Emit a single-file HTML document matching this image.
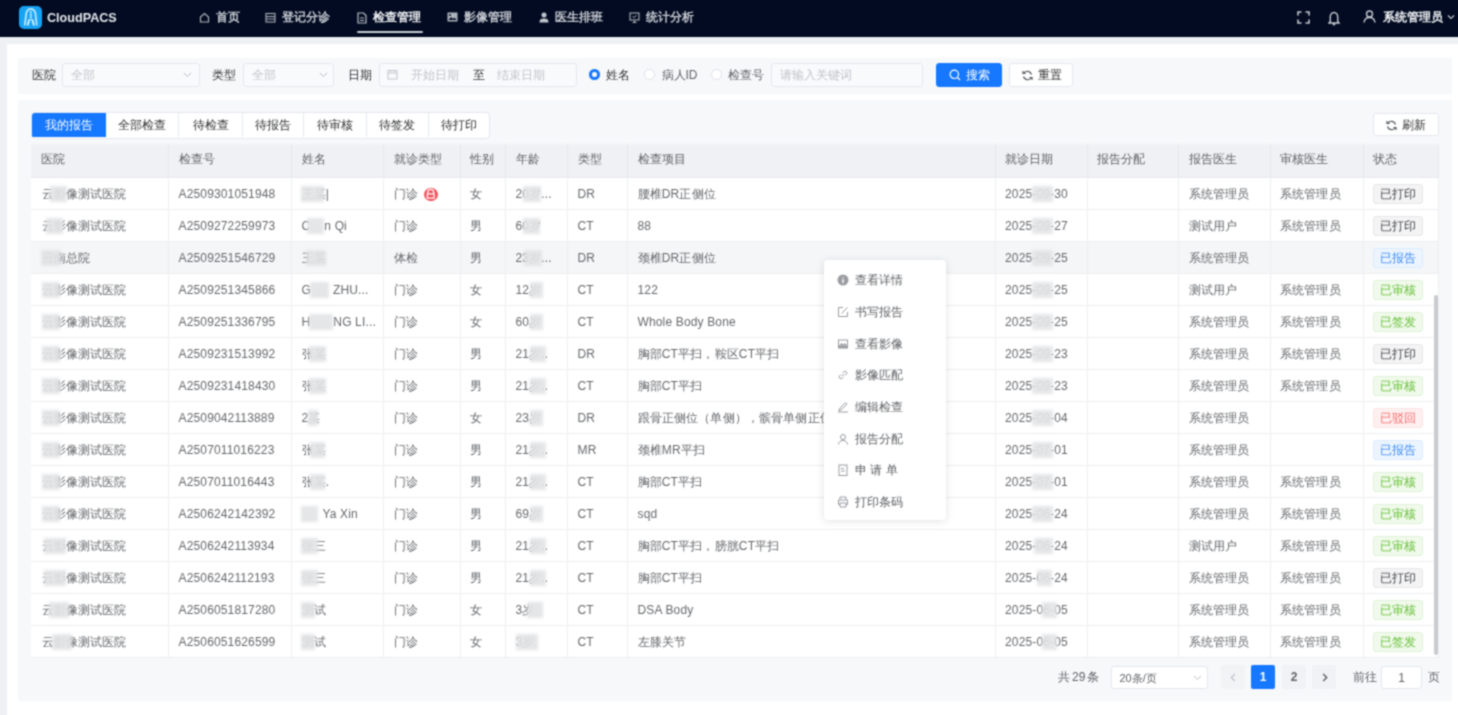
<!DOCTYPE html><html><head><meta charset="utf-8"><style>
*{box-sizing:border-box;margin:0;padding:0}
body{width:1458px;height:715px;overflow:hidden;background:#fff;font-family:"Liberation Sans",sans-serif;position:relative;color:#606266}
.abs{position:absolute}
svg{display:block}
#hdr{left:0;top:0;width:1458px;height:37px;background:#020b21}
#band{left:0;top:37px;width:1458px;height:7px;background:#eef0f4}
#lband{left:0;top:37px;width:7px;height:678px;background:#eef0f4}
.logo{left:18.5px;top:6px;width:23.5px;height:23px;border-radius:5px;background:#17a3f4;overflow:hidden}
.brand{left:47px;top:11px;font-size:12.6px;font-weight:bold;color:#e4e7ec;line-height:14px}
.nav{top:9px;font-size:12.3px;color:#c5c9d0;white-space:nowrap;line-height:16px;font-weight:bold}
.nav.act{color:#eef0f3}
.nico{top:12px}
.ul{left:357px;top:30.5px;width:66px;height:2.5px;background:#c8ccd4;border-radius:1px}
#filt{left:18px;top:57.5px;width:1434px;height:36px;background:#f7f8fa}
#tblp{left:18px;top:100px;width:1434px;height:601px;background:#f7f8fa}
.lbl{font-size:12px;color:#303133;top:67px;line-height:16px}
.inp{height:24px;top:63px;border:1px solid #e4e7ed;border-radius:3px;background:#f9fafb;font-size:12px;color:#c0c4cc;line-height:22px;white-space:nowrap}
.ph{position:absolute;top:0;color:#c0c4cc}
.chev{position:absolute;top:8px}
.btn{top:63px;height:24px;border-radius:3px;font-size:12px;line-height:22px;white-space:nowrap}
.radio{top:69px;width:10.5px;height:10.5px;border-radius:50%;border:1px solid #dcdfe6;background:#fff}
.radio.on{border:3px solid #1677ff}
.tabs{left:31px;top:112px;height:26.5px;border:1px solid #e4e7ed;border-radius:4px;background:#fff;display:flex;overflow:hidden}
.tab{height:24px;line-height:24px;font-size:12px;color:#303133;text-align:center;border-right:1px solid #e4e7ed;flex:none}
.tab:last-child{border-right:none}
.tab.on{background:#1677ff;color:#fff;border-right:none}
.th{top:144px;height:34px;background:#eff1f4;border-bottom:1px solid #e8eaef}
.cellh{position:absolute;font-size:12px;color:#606266;line-height:30px;padding-left:9.5px;border-right:1px solid #e6e8ee;height:33px}
.row{position:absolute;left:31px;width:1408px;height:32px;background:#fff;border-bottom:1px solid #eceef1}
.row.hov{background:#f5f6f7}
.c{position:absolute;top:0;height:31px;line-height:33px;font-size:12px;letter-spacing:0.15px;color:#66686c;padding-left:9.5px;white-space:nowrap;overflow:hidden;border-right:1px solid #eceef1}
.blob{position:absolute;top:8px;height:16px;background:#e3e4e6;filter:blur(1.6px);opacity:.92}
.m::after{content:"";position:absolute;left:-1px;right:-1px;top:-4px;bottom:-4px;background:#dadbde;filter:blur(2px)}
.tag{display:inline-block;height:20px;line-height:18px;padding:0 6px;font-size:12px;border:1px solid;border-radius:3px;vertical-align:middle;position:relative;top:-1px}
.tp{background:#f4f4f5;border-color:#e6e7e9;color:#45474b}
.tr{background:#ecf5ff;border-color:#d9ecff;color:#3d8bf5}
.ta{background:#f0f9eb;border-color:#e1f3d8;color:#67c23a}
.tx{background:#fef0f0;border-color:#fde2e2;color:#f56c6c}
#menu{left:824px;top:260px;width:122px;height:260px;background:#fff;border-radius:4px;box-shadow:0 1px 8px rgba(0,0,0,.12)}
.mi{position:absolute;left:31px;font-size:12px;color:#606266;white-space:nowrap;line-height:16px}
.mic{position:absolute;left:13px}
.pg{top:665px;height:24px;width:24px;border-radius:2px;background:#f0f2f5;font-size:12px;line-height:24px;text-align:center;color:#606266;font-weight:bold}
#sb{left:1433.5px;top:295px;width:4px;height:360px;background:#c9cbcf;border-radius:2px}
#root{position:absolute;left:0;top:0;width:1458px;height:715px;overflow:hidden;filter:url(#soft)}
</style></head><body><svg width="0" height="0" style="position:absolute"><filter id="soft" x="0" y="0" width="100%" height="100%" color-interpolation-filters="sRGB"><feConvolveMatrix order="3" kernelMatrix="1 2 1 2 6 2 1 2 1" divisor="18" edgeMode="duplicate"/></filter></svg><div id="root">

<div id="hdr" class="abs"></div><div id="band" class="abs"></div><div id="lband" class="abs"></div>
<div class="abs logo"><svg width="24" height="23" viewBox="0 0 24 23"><path d="M5.8 19.5L7.3 7Q8.3 3 11.8 3Q15.3 3 16.3 7L17.8 19.5" fill="none" stroke="#c8ecfd" stroke-width="1.9" opacity=".9"/><path d="M8.6 19.5L10.3 13.5M15 19.5L13.3 13.5" fill="none" stroke="#d6f2fe" stroke-width="1.9"/><path d="M11.8 5.5V14" stroke="#e0f5fe" stroke-width="2.2" stroke-dasharray="1.6 0.9"/></svg></div>
<div class="abs brand">CloudPACS</div>
<div class="abs nico" style="left:198.5px"><svg width="11" height="11" viewBox="0 0 11 11"><path d="M1.5 5 L5.5 1.5 L9.5 5 V10 H1.5 Z" fill="none" stroke="#aeb3bb" stroke-width="1.2"/></svg></div>
<div class="abs nav" style="left:215.5px">首页</div>
<div class="abs nico" style="left:264.5px"><svg width="11" height="11" viewBox="0 0 11 11"><rect x="1" y="1.5" width="9" height="8.5" fill="none" stroke="#aeb3bb" stroke-width="1.1"/><path d="M1 4.5H10M1 7H10" stroke="#aeb3bb" stroke-width="1"/></svg></div>
<div class="abs nav" style="left:282px">登记分诊</div>
<div class="abs nico" style="left:356.5px"><svg width="10" height="12" viewBox="0 0 10 12"><path d="M1 1H6.5L9 3.5V11H1Z" fill="none" stroke="#bcc0c7" stroke-width="1.2"/><path d="M3 6H7M3 8.5H7" stroke="#bcc0c7" stroke-width="1"/></svg></div>
<div class="abs nav act" style="left:373px">检查管理</div>
<div class="abs nico" style="left:447px"><svg width="11" height="10" viewBox="0 0 11 10"><rect x="0.5" y="0.5" width="10" height="9" fill="#aeb3bb"/><path d="M1.5 8L4 5L6 7L7.5 5.5L9.5 8Z" fill="#020b21"/><circle cx="3" cy="3" r="1" fill="#020b21"/></svg></div>
<div class="abs nav" style="left:464px">影像管理</div>
<div class="abs nico" style="left:538.5px"><svg width="10" height="11" viewBox="0 0 10 11"><circle cx="5" cy="3" r="2.5" fill="#c2c6cd"/><path d="M0.5 10.5C0.5 7 2.5 6.5 5 6.5S9.5 7 9.5 10.5Z" fill="#c2c6cd"/></svg></div>
<div class="abs nav" style="left:555px">医生排班</div>
<div class="abs nico" style="left:629px"><svg width="11" height="11" viewBox="0 0 11 11"><rect x="1" y="1" width="9" height="7" fill="none" stroke="#aeb3bb" stroke-width="1.1"/><path d="M3.5 10.5H7.5M5.5 8V10.5M3.5 4.5L5 5.5L7.5 3.5" stroke="#aeb3bb" stroke-width="1" fill="none"/></svg></div>
<div class="abs nav" style="left:646px">统计分析</div>
<div class="abs ul"></div>
<div class="abs" style="left:1296.5px;top:10.5px"><svg width="13" height="13" viewBox="0 0 13 13"><path d="M1 4.5V1H4.5M8.5 1H12V4.5M12 8.5V12H8.5M4.5 12H1V8.5" fill="none" stroke="#c4c8cf" stroke-width="1.6"/></svg></div>
<div class="abs" style="left:1328px;top:10.5px"><svg width="12" height="15" viewBox="0 0 12 15"><path d="M6 1.5C3.5 1.5 2.3 3.5 2.3 6V10.5L1 12H11L9.7 10.5V6C9.7 3.5 8.5 1.5 6 1.5Z" fill="none" stroke="#c4c8cf" stroke-width="1.4"/><circle cx="6" cy="13.3" r="1.2" fill="#c4c8cf"/></svg></div>
<div class="abs" style="left:1362.5px;top:10px"><svg width="13" height="13" viewBox="0 0 13 13"><circle cx="6.5" cy="4" r="3" fill="none" stroke="#c4c8cf" stroke-width="1.4"/><path d="M1 12.5C1.5 9 3.5 7.5 6.5 7.5S11.5 9 12 12.5" fill="none" stroke="#c4c8cf" stroke-width="1.4"/></svg></div>
<div class="abs nav act" style="left:1383px;top:9px;font-weight:bold">系统管理员</div>
<div class="abs" style="left:1447px;top:14px"><svg width="8" height="6" viewBox="0 0 8 6"><path d="M1 1.5L4 4.5L7 1.5" fill="none" stroke="#c4c8cf" stroke-width="1.2"/></svg></div>
<div id="filt" class="abs"></div><div id="tblp" class="abs"></div>
<div class="abs lbl" style="left:32px">医院</div>
<div class="abs inp" style="left:62px;width:138px"><span class="ph" style="left:8px">全部</span><span class="chev" style="left:120px"><svg width="9" height="6" viewBox="0 0 9 6"><path d="M1 1L4.5 4.5L8 1" fill="none" stroke="#b8bcc4" stroke-width="1"/></svg></span></div>
<div class="abs lbl" style="left:212px">类型</div>
<div class="abs inp" style="left:243px;width:91px"><span class="ph" style="left:8px">全部</span><span class="chev" style="left:75px"><svg width="9" height="6" viewBox="0 0 9 6"><path d="M1 1L4.5 4.5L8 1" fill="none" stroke="#b8bcc4" stroke-width="1"/></svg></span></div>
<div class="abs lbl" style="left:348px">日期</div>
<div class="abs inp" style="left:378.5px;width:198px"><span class="ph" style="left:7px;top:5px"><svg width="11" height="11" viewBox="0 0 11 11"><rect x="1" y="1.5" width="9" height="8.5" fill="none" stroke="#c0c4cc" stroke-width="1"/><path d="M1 4H10M3.5 1V3M7.5 1V3" stroke="#c0c4cc" stroke-width="1"/></svg></span><span class="ph" style="left:31px">开始日期</span><span class="ph" style="left:93px;color:#303133">至</span><span class="ph" style="left:117px">结束日期</span></div>
<div class="abs radio on" style="left:589px"></div><div class="abs lbl" style="left:606px">姓名</div>
<div class="abs radio" style="left:644px"></div><div class="abs lbl" style="left:661.5px;color:#606266">病人ID</div>
<div class="abs radio" style="left:711px"></div><div class="abs lbl" style="left:728px;color:#606266">检查号</div>
<div class="abs inp" style="left:771px;width:152px"><span class="ph" style="left:8px">请输入关键词</span></div>
<div class="abs btn" style="left:936px;width:66px;background:#1677ff;color:#fff;border:1px solid #1677ff"><span class="abs" style="left:12px;top:5px"><svg width="12" height="12" viewBox="0 0 12 12"><circle cx="5.3" cy="5.3" r="4.2" fill="none" stroke="#fff" stroke-width="1.2"/><path d="M8.5 8.5L11 11" stroke="#fff" stroke-width="1.2"/></svg></span><span class="abs" style="left:29px;top:0">搜索</span></div>
<div class="abs btn" style="left:1009px;width:64px;background:#fff;color:#303133;border:1px solid #e4e7ed"><span class="abs" style="left:12px;top:6px"><svg width="11" height="11" viewBox="0 0 11 11"><path d="M9.5 4.5A4.2 4.2 0 0 0 2 3M1.5 6.5A4.2 4.2 0 0 0 9 8" fill="none" stroke="#505358" stroke-width="1.2"/><path d="M1 1V3.5H3.5M10 10V7.5H7.5" fill="none" stroke="#505358" stroke-width="1.2"/></svg></span><span class="abs" style="left:28px;top:0;font-weight:500">重置</span></div>
<div class="abs tabs">
<div class="tab on" style="width:74.4px">我的报告</div>
<div class="tab" style="width:73.1px">全部检查</div>
<div class="tab" style="width:63.2px">待检查</div>
<div class="tab" style="width:61.8px">待报告</div>
<div class="tab" style="width:62.1px">待审核</div>
<div class="tab" style="width:62px">待签发</div>
<div class="tab" style="width:60px">待打印</div>
</div>
<div class="abs btn" style="left:1373px;top:113px;width:65.5px;height:23px;background:#fff;color:#303133;border:1px solid #e4e7ed"><span class="abs" style="left:12px;top:5.5px"><svg width="11" height="11" viewBox="0 0 11 11"><path d="M9.5 4.5A4.2 4.2 0 0 0 2 3M1.5 6.5A4.2 4.2 0 0 0 9 8" fill="none" stroke="#505358" stroke-width="1.2"/><path d="M1 1V3.5H3.5M10 10V7.5H7.5" fill="none" stroke="#505358" stroke-width="1.2"/></svg></span><span class="abs" style="left:28px;top:0">刷新</span></div>
<div class="abs th" style="left:31px;width:1408px"></div>
<div class="cellh" style="left:31px;top:144px;width:138.0px">医院</div>
<div class="cellh" style="left:169.0px;top:144px;width:123.0px">检查号</div>
<div class="cellh" style="left:292.0px;top:144px;width:92.0px">姓名</div>
<div class="cellh" style="left:384.0px;top:144px;width:76.5px">就诊类型</div>
<div class="cellh" style="left:460.5px;top:144px;width:45.5px">性别</div>
<div class="cellh" style="left:506.0px;top:144px;width:62.0px">年龄</div>
<div class="cellh" style="left:568.0px;top:144px;width:60.0px">类型</div>
<div class="cellh" style="left:628.0px;top:144px;width:367.5px">检查项目</div>
<div class="cellh" style="left:995.5px;top:144px;width:92.0px">就诊日期</div>
<div class="cellh" style="left:1087.5px;top:144px;width:91.5px">报告分配</div>
<div class="cellh" style="left:1179.0px;top:144px;width:91.5px">报告医生</div>
<div class="cellh" style="left:1270.5px;top:144px;width:93.0px">审核医生</div>
<div class="cellh" style="left:1363.5px;top:144px;width:75.5px">状态</div>
<div class="row" style="top:178px">
<div class="c" style="padding-left:10.5px;left:0px;width:138.0px">云影像测试医院</div>
<div class="c" style="left:138.0px;width:123.0px">A2509301051948</div>
<div class="c" style="left:261.0px;width:92.0px">王某|</div>
<div class="c" style="left:353.0px;width:76.5px">门诊 <span style="display:inline-block;width:13.5px;height:13.5px;border-radius:50%;background:#f5505a;vertical-align:middle;position:relative;top:-0.5px;margin-left:3px"><svg width="13.5" height="13.5" viewBox="0 0 14 14"><path d="M4 6V4.5A3 3 0 0 1 10 4.5V6M3.5 6H10.5V10.5H3.5Z" fill="none" stroke="#fff" stroke-width="1.3"/></svg></span></div>
<div class="c" style="left:429.5px;width:45.5px">女</div>
<div class="c" style="left:475.0px;width:62.0px">20岁...</div>
<div class="c" style="left:537.0px;width:60.0px">DR</div>
<div class="c" style="left:597.0px;width:367.5px">腰椎DR正侧位</div>
<div class="c" style="left:964.5px;width:92.0px">2025-09-30</div>
<div class="c" style="left:1056.5px;width:91.5px"></div>
<div class="c" style="left:1148.0px;width:91.5px">系统管理员</div>
<div class="c" style="left:1239.5px;width:93.0px">系统管理员</div>
<div class="c" style="left:1332.5px;width:75.5px"><span class="tag tp">已打印</span></div>
<i class="blob" style="left:19px;width:17px"></i>
<i class="blob" style="left:270px;width:23px"></i>
<i class="blob" style="left:492px;width:18px"></i>
<i class="blob" style="left:1001px;width:21px"></i>
</div>
<div class="row" style="top:210px">
<div class="c" style="padding-left:10.5px;left:0px;width:138.0px">云影像测试医院</div>
<div class="c" style="left:138.0px;width:123.0px">A2509272259973</div>
<div class="c" style="left:261.0px;width:92.0px">C<span style="display:inline-block;width:14px"></span>n Qi</div>
<div class="c" style="left:353.0px;width:76.5px">门诊</div>
<div class="c" style="left:429.5px;width:45.5px">男</div>
<div class="c" style="left:475.0px;width:62.0px">60岁</div>
<div class="c" style="left:537.0px;width:60.0px">CT</div>
<div class="c" style="left:597.0px;width:367.5px">88</div>
<div class="c" style="left:964.5px;width:92.0px">2025-09-27</div>
<div class="c" style="left:1056.5px;width:91.5px"></div>
<div class="c" style="left:1148.0px;width:91.5px">测试用户</div>
<div class="c" style="left:1239.5px;width:93.0px">系统管理员</div>
<div class="c" style="left:1332.5px;width:75.5px"><span class="tag tp">已打印</span></div>
<i class="blob" style="left:15px;width:17px"></i>
<i class="blob" style="left:276px;width:17px"></i>
<i class="blob" style="left:492px;width:17px"></i>
<i class="blob" style="left:1001px;width:21px"></i>
</div>
<div class="row hov" style="top:242px">
<div class="c" style="padding-left:10.5px;left:0px;width:138.0px">云南总院</div>
<div class="c" style="left:138.0px;width:123.0px">A2509251546729</div>
<div class="c" style="left:261.0px;width:92.0px">王某</div>
<div class="c" style="left:353.0px;width:76.5px">体检</div>
<div class="c" style="left:429.5px;width:45.5px">男</div>
<div class="c" style="left:475.0px;width:62.0px">23岁...</div>
<div class="c" style="left:537.0px;width:60.0px">DR</div>
<div class="c" style="left:597.0px;width:367.5px">颈椎DR正侧位</div>
<div class="c" style="left:964.5px;width:92.0px">2025-09-25</div>
<div class="c" style="left:1056.5px;width:91.5px"></div>
<div class="c" style="left:1148.0px;width:91.5px">系统管理员</div>
<div class="c" style="left:1239.5px;width:93.0px"></div>
<div class="c" style="left:1332.5px;width:75.5px"><span class="tag tr">已报告</span></div>
<i class="blob" style="left:10px;width:20px"></i>
<i class="blob" style="left:275px;width:20px"></i>
<i class="blob" style="left:493px;width:18px"></i>
<i class="blob" style="left:1001px;width:21px"></i>
</div>
<div class="row" style="top:274px">
<div class="c" style="padding-left:10.5px;left:0px;width:138.0px">云影像测试医院</div>
<div class="c" style="left:138.0px;width:123.0px">A2509251345866</div>
<div class="c" style="left:261.0px;width:92.0px">G<span style="display:inline-block;width:22px"></span>ZHU...</div>
<div class="c" style="left:353.0px;width:76.5px">门诊</div>
<div class="c" style="left:429.5px;width:45.5px">女</div>
<div class="c" style="left:475.0px;width:62.0px">12岁</div>
<div class="c" style="left:537.0px;width:60.0px">CT</div>
<div class="c" style="left:597.0px;width:367.5px">122</div>
<div class="c" style="left:964.5px;width:92.0px">2025-09-25</div>
<div class="c" style="left:1056.5px;width:91.5px"></div>
<div class="c" style="left:1148.0px;width:91.5px">测试用户</div>
<div class="c" style="left:1239.5px;width:93.0px">系统管理员</div>
<div class="c" style="left:1332.5px;width:75.5px"><span class="tag ta">已审核</span></div>
<i class="blob" style="left:11px;width:18px"></i>
<i class="blob" style="left:279px;width:19px"></i>
<i class="blob" style="left:499px;width:13px"></i>
<i class="blob" style="left:1001px;width:21px"></i>
</div>
<div class="row" style="top:306px">
<div class="c" style="padding-left:10.5px;left:0px;width:138.0px">云影像测试医院</div>
<div class="c" style="left:138.0px;width:123.0px">A2509251336795</div>
<div class="c" style="left:261.0px;width:92.0px">H<span style="display:inline-block;width:23px"></span>NG LI...</div>
<div class="c" style="left:353.0px;width:76.5px">门诊</div>
<div class="c" style="left:429.5px;width:45.5px">女</div>
<div class="c" style="left:475.0px;width:62.0px">60岁</div>
<div class="c" style="left:537.0px;width:60.0px">CT</div>
<div class="c" style="left:597.0px;width:367.5px">Whole Body Bone</div>
<div class="c" style="left:964.5px;width:92.0px">2025-09-25</div>
<div class="c" style="left:1056.5px;width:91.5px"></div>
<div class="c" style="left:1148.0px;width:91.5px">系统管理员</div>
<div class="c" style="left:1239.5px;width:93.0px">系统管理员</div>
<div class="c" style="left:1332.5px;width:75.5px"><span class="tag ta">已签发</span></div>
<i class="blob" style="left:11px;width:18px"></i>
<i class="blob" style="left:278px;width:24px"></i>
<i class="blob" style="left:499px;width:13px"></i>
<i class="blob" style="left:1001px;width:21px"></i>
</div>
<div class="row" style="top:338px">
<div class="c" style="padding-left:10.5px;left:0px;width:138.0px">云影像测试医院</div>
<div class="c" style="left:138.0px;width:123.0px">A2509231513992</div>
<div class="c" style="left:261.0px;width:92.0px">张某</div>
<div class="c" style="left:353.0px;width:76.5px">门诊</div>
<div class="c" style="left:429.5px;width:45.5px">男</div>
<div class="c" style="left:475.0px;width:62.0px">21岁..</div>
<div class="c" style="left:537.0px;width:60.0px">DR</div>
<div class="c" style="left:597.0px;width:367.5px">胸部CT平扫，鞍区CT平扫</div>
<div class="c" style="left:964.5px;width:92.0px">2025-09-23</div>
<div class="c" style="left:1056.5px;width:91.5px"></div>
<div class="c" style="left:1148.0px;width:91.5px">系统管理员</div>
<div class="c" style="left:1239.5px;width:93.0px">系统管理员</div>
<div class="c" style="left:1332.5px;width:75.5px"><span class="tag tp">已打印</span></div>
<i class="blob" style="left:11px;width:18px"></i>
<i class="blob" style="left:278px;width:17px"></i>
<i class="blob" style="left:499px;width:16px"></i>
<i class="blob" style="left:1001px;width:21px"></i>
</div>
<div class="row" style="top:370px">
<div class="c" style="padding-left:10.5px;left:0px;width:138.0px">云影像测试医院</div>
<div class="c" style="left:138.0px;width:123.0px">A2509231418430</div>
<div class="c" style="left:261.0px;width:92.0px">张某</div>
<div class="c" style="left:353.0px;width:76.5px">门诊</div>
<div class="c" style="left:429.5px;width:45.5px">男</div>
<div class="c" style="left:475.0px;width:62.0px">21岁..</div>
<div class="c" style="left:537.0px;width:60.0px">CT</div>
<div class="c" style="left:597.0px;width:367.5px">胸部CT平扫</div>
<div class="c" style="left:964.5px;width:92.0px">2025-09-23</div>
<div class="c" style="left:1056.5px;width:91.5px"></div>
<div class="c" style="left:1148.0px;width:91.5px">系统管理员</div>
<div class="c" style="left:1239.5px;width:93.0px">系统管理员</div>
<div class="c" style="left:1332.5px;width:75.5px"><span class="tag ta">已审核</span></div>
<i class="blob" style="left:11px;width:18px"></i>
<i class="blob" style="left:278px;width:17px"></i>
<i class="blob" style="left:499px;width:16px"></i>
<i class="blob" style="left:1001px;width:21px"></i>
</div>
<div class="row" style="top:402px">
<div class="c" style="padding-left:10.5px;left:0px;width:138.0px">云影像测试医院</div>
<div class="c" style="left:138.0px;width:123.0px">A2509042113889</div>
<div class="c" style="left:261.0px;width:92.0px">2某</div>
<div class="c" style="left:353.0px;width:76.5px">门诊</div>
<div class="c" style="left:429.5px;width:45.5px">女</div>
<div class="c" style="left:475.0px;width:62.0px">23岁</div>
<div class="c" style="left:537.0px;width:60.0px">DR</div>
<div class="c" style="left:597.0px;width:367.5px">跟骨正侧位（单侧），髌骨单侧正位</div>
<div class="c" style="left:964.5px;width:92.0px">2025-09-04</div>
<div class="c" style="left:1056.5px;width:91.5px"></div>
<div class="c" style="left:1148.0px;width:91.5px">系统管理员</div>
<div class="c" style="left:1239.5px;width:93.0px"></div>
<div class="c" style="left:1332.5px;width:75.5px"><span class="tag tx">已驳回</span></div>
<i class="blob" style="left:11px;width:18px"></i>
<i class="blob" style="left:277px;width:10px"></i>
<i class="blob" style="left:499px;width:13px"></i>
<i class="blob" style="left:1001px;width:21px"></i>
</div>
<div class="row" style="top:434px">
<div class="c" style="padding-left:10.5px;left:0px;width:138.0px">云影像测试医院</div>
<div class="c" style="left:138.0px;width:123.0px">A2507011016223</div>
<div class="c" style="left:261.0px;width:92.0px">张某</div>
<div class="c" style="left:353.0px;width:76.5px">门诊</div>
<div class="c" style="left:429.5px;width:45.5px">男</div>
<div class="c" style="left:475.0px;width:62.0px">21岁..</div>
<div class="c" style="left:537.0px;width:60.0px">MR</div>
<div class="c" style="left:597.0px;width:367.5px">颈椎MR平扫</div>
<div class="c" style="left:964.5px;width:92.0px">2025-07-01</div>
<div class="c" style="left:1056.5px;width:91.5px"></div>
<div class="c" style="left:1148.0px;width:91.5px">系统管理员</div>
<div class="c" style="left:1239.5px;width:93.0px"></div>
<div class="c" style="left:1332.5px;width:75.5px"><span class="tag tr">已报告</span></div>
<i class="blob" style="left:11px;width:18px"></i>
<i class="blob" style="left:279px;width:15px"></i>
<i class="blob" style="left:499px;width:16px"></i>
<i class="blob" style="left:1001px;width:21px"></i>
</div>
<div class="row" style="top:466px">
<div class="c" style="padding-left:10.5px;left:0px;width:138.0px">云影像测试医院</div>
<div class="c" style="left:138.0px;width:123.0px">A2507011016443</div>
<div class="c" style="left:261.0px;width:92.0px">张某.</div>
<div class="c" style="left:353.0px;width:76.5px">门诊</div>
<div class="c" style="left:429.5px;width:45.5px">男</div>
<div class="c" style="left:475.0px;width:62.0px">21岁..</div>
<div class="c" style="left:537.0px;width:60.0px">CT</div>
<div class="c" style="left:597.0px;width:367.5px">胸部CT平扫</div>
<div class="c" style="left:964.5px;width:92.0px">2025-07-01</div>
<div class="c" style="left:1056.5px;width:91.5px"></div>
<div class="c" style="left:1148.0px;width:91.5px">系统管理员</div>
<div class="c" style="left:1239.5px;width:93.0px">系统管理员</div>
<div class="c" style="left:1332.5px;width:75.5px"><span class="tag ta">已审核</span></div>
<i class="blob" style="left:11px;width:18px"></i>
<i class="blob" style="left:279px;width:15px"></i>
<i class="blob" style="left:499px;width:16px"></i>
<i class="blob" style="left:1001px;width:21px"></i>
</div>
<div class="row" style="top:498px">
<div class="c" style="padding-left:10.5px;left:0px;width:138.0px">云影像测试医院</div>
<div class="c" style="left:138.0px;width:123.0px">A2506242142392</div>
<div class="c" style="left:261.0px;width:92.0px"><span style="display:inline-block;width:21px"></span>Ya Xin</div>
<div class="c" style="left:353.0px;width:76.5px">门诊</div>
<div class="c" style="left:429.5px;width:45.5px">男</div>
<div class="c" style="left:475.0px;width:62.0px">69岁</div>
<div class="c" style="left:537.0px;width:60.0px">CT</div>
<div class="c" style="left:597.0px;width:367.5px">sqd</div>
<div class="c" style="left:964.5px;width:92.0px">2025-06-24</div>
<div class="c" style="left:1056.5px;width:91.5px"></div>
<div class="c" style="left:1148.0px;width:91.5px">系统管理员</div>
<div class="c" style="left:1239.5px;width:93.0px">系统管理员</div>
<div class="c" style="left:1332.5px;width:75.5px"><span class="tag ta">已审核</span></div>
<i class="blob" style="left:11px;width:18px"></i>
<i class="blob" style="left:270px;width:17px"></i>
<i class="blob" style="left:499px;width:13px"></i>
<i class="blob" style="left:1001px;width:21px"></i>
</div>
<div class="row" style="top:530px">
<div class="c" style="padding-left:10.5px;left:0px;width:138.0px">云影像测试医院</div>
<div class="c" style="left:138.0px;width:123.0px">A2506242113934</div>
<div class="c" style="left:261.0px;width:92.0px">张三</div>
<div class="c" style="left:353.0px;width:76.5px">门诊</div>
<div class="c" style="left:429.5px;width:45.5px">男</div>
<div class="c" style="left:475.0px;width:62.0px">21岁..</div>
<div class="c" style="left:537.0px;width:60.0px">CT</div>
<div class="c" style="left:597.0px;width:367.5px">胸部CT平扫，膀胱CT平扫</div>
<div class="c" style="left:964.5px;width:92.0px">2025-06-24</div>
<div class="c" style="left:1056.5px;width:91.5px"></div>
<div class="c" style="left:1148.0px;width:91.5px">测试用户</div>
<div class="c" style="left:1239.5px;width:93.0px">系统管理员</div>
<div class="c" style="left:1332.5px;width:75.5px"><span class="tag ta">已审核</span></div>
<i class="blob" style="left:13px;width:22px"></i>
<i class="blob" style="left:270px;width:17px"></i>
<i class="blob" style="left:499px;width:16px"></i>
<i class="blob" style="left:1003px;width:19px"></i>
</div>
<div class="row" style="top:562px">
<div class="c" style="padding-left:10.5px;left:0px;width:138.0px">云影像测试医院</div>
<div class="c" style="left:138.0px;width:123.0px">A2506242112193</div>
<div class="c" style="left:261.0px;width:92.0px">张三</div>
<div class="c" style="left:353.0px;width:76.5px">门诊</div>
<div class="c" style="left:429.5px;width:45.5px">男</div>
<div class="c" style="left:475.0px;width:62.0px">21岁..</div>
<div class="c" style="left:537.0px;width:60.0px">CT</div>
<div class="c" style="left:597.0px;width:367.5px">胸部CT平扫</div>
<div class="c" style="left:964.5px;width:92.0px">2025-06-24</div>
<div class="c" style="left:1056.5px;width:91.5px"></div>
<div class="c" style="left:1148.0px;width:91.5px">系统管理员</div>
<div class="c" style="left:1239.5px;width:93.0px">系统管理员</div>
<div class="c" style="left:1332.5px;width:75.5px"><span class="tag tp">已打印</span></div>
<i class="blob" style="left:13px;width:22px"></i>
<i class="blob" style="left:270px;width:17px"></i>
<i class="blob" style="left:499px;width:16px"></i>
<i class="blob" style="left:1006px;width:15px"></i>
</div>
<div class="row" style="top:594px">
<div class="c" style="padding-left:10.5px;left:0px;width:138.0px">云影像测试医院</div>
<div class="c" style="left:138.0px;width:123.0px">A2506051817280</div>
<div class="c" style="left:261.0px;width:92.0px">测试</div>
<div class="c" style="left:353.0px;width:76.5px">门诊</div>
<div class="c" style="left:429.5px;width:45.5px">女</div>
<div class="c" style="left:475.0px;width:62.0px">3岁</div>
<div class="c" style="left:537.0px;width:60.0px">CT</div>
<div class="c" style="left:597.0px;width:367.5px">DSA Body</div>
<div class="c" style="left:964.5px;width:92.0px">2025-06-05</div>
<div class="c" style="left:1056.5px;width:91.5px"></div>
<div class="c" style="left:1148.0px;width:91.5px">系统管理员</div>
<div class="c" style="left:1239.5px;width:93.0px">系统管理员</div>
<div class="c" style="left:1332.5px;width:75.5px"><span class="tag ta">已审核</span></div>
<i class="blob" style="left:18px;width:20px"></i>
<i class="blob" style="left:270px;width:14px"></i>
<i class="blob" style="left:496px;width:16px"></i>
<i class="blob" style="left:1011px;width:15px"></i>
</div>
<div class="row" style="top:626px">
<div class="c" style="padding-left:10.5px;left:0px;width:138.0px">云影像测试医院</div>
<div class="c" style="left:138.0px;width:123.0px">A2506051626599</div>
<div class="c" style="left:261.0px;width:92.0px">测试</div>
<div class="c" style="left:353.0px;width:76.5px">门诊</div>
<div class="c" style="left:429.5px;width:45.5px">女</div>
<div class="c" style="left:475.0px;width:62.0px">3岁</div>
<div class="c" style="left:537.0px;width:60.0px">CT</div>
<div class="c" style="left:597.0px;width:367.5px">左膝关节</div>
<div class="c" style="left:964.5px;width:92.0px">2025-06-05</div>
<div class="c" style="left:1056.5px;width:91.5px"></div>
<div class="c" style="left:1148.0px;width:91.5px">系统管理员</div>
<div class="c" style="left:1239.5px;width:93.0px">系统管理员</div>
<div class="c" style="left:1332.5px;width:75.5px"><span class="tag ta">已签发</span></div>
<i class="blob" style="left:21px;width:20px"></i>
<i class="blob" style="left:270px;width:14px"></i>
<i class="blob" style="left:485px;width:22px"></i>
<i class="blob" style="left:1011px;width:15px"></i>
</div>
<div id="sb" class="abs"></div>
<div id="menu" class="abs">
<div class="mic" style="top:14.399999999999977px"><svg width="12" height="12" viewBox="0 0 12 12"><circle cx="6" cy="6" r="5.5" fill="#9a9ca2"/><path d="M6 5V9M6 3V3.8" stroke="#fff" stroke-width="1.4"/></svg></div>
<div class="mi" style="top:12.399999999999977px">查看详情</div>
<div class="mic" style="top:46.19999999999999px"><svg width="12" height="12" viewBox="0 0 12 12"><path d="M6 1.5H1.5V10.5H10.5V6" fill="none" stroke="#9a9ca2" stroke-width="1"/><path d="M4.5 7.5L10.5 1.5" stroke="#9a9ca2" stroke-width="1"/></svg></div>
<div class="mi" style="top:44.19999999999999px">书写报告</div>
<div class="mic" style="top:77.80000000000001px"><svg width="12" height="12" viewBox="0 0 12 12"><rect x="1" y="1.5" width="10" height="9" fill="#9a9ca2"/><rect x="2" y="2.5" width="8" height="5" fill="#fff"/><path d="M2 7.5L4.5 5L6.5 6.5L8 5L10 7.5Z" fill="#9a9ca2"/></svg></div>
<div class="mi" style="top:75.80000000000001px">查看影像</div>
<div class="mic" style="top:109.39999999999998px"><svg width="12" height="12" viewBox="0 0 12 12"><path d="M5 7L7 5M4 5.5L2.5 7A1.8 1.8 0 0 0 5 9.5L6.5 8M8 6.5L9.5 5A1.8 1.8 0 0 0 7 2.5L5.5 4" fill="none" stroke="#9a9ca2" stroke-width="1"/></svg></div>
<div class="mi" style="top:107.39999999999998px">影像匹配</div>
<div class="mic" style="top:141px"><svg width="12" height="12" viewBox="0 0 12 12"><path d="M2 10L3 7L8.5 1.5L10 3L4.5 8.5Z M1 11H11" fill="none" stroke="#9a9ca2" stroke-width="1"/></svg></div>
<div class="mi" style="top:139px">编辑检查</div>
<div class="mic" style="top:172.60000000000002px"><svg width="12" height="12" viewBox="0 0 12 12"><circle cx="6" cy="4" r="2.5" fill="none" stroke="#9a9ca2" stroke-width="1"/><path d="M1.5 11.5C2 8.5 3.5 7.5 6 7.5S10 8.5 10.5 11.5" fill="none" stroke="#9a9ca2" stroke-width="1"/></svg></div>
<div class="mi" style="top:170.60000000000002px">报告分配</div>
<div class="mic" style="top:204.2px"><svg width="12" height="12" viewBox="0 0 12 12"><rect x="2" y="1" width="8" height="10.5" fill="none" stroke="#9a9ca2" stroke-width="1"/><path d="M4 4.5H7M4 7H8" stroke="#9a9ca2" stroke-width="1"/></svg></div>
<div class="mi" style="top:202.2px">申 请 单</div>
<div class="mic" style="top:235.8px"><svg width="12" height="12" viewBox="0 0 12 12"><path d="M3 4V1H9V4M3 8.5H1.5V4H10.5V8.5H9M3 7H9V11H3Z" fill="none" stroke="#9a9ca2" stroke-width="1"/></svg></div>
<div class="mi" style="top:233.8px">打印条码</div>
</div>
<div class="abs lbl" style="left:1058px;top:669px;color:#606266">共<span style="margin:0 2px">29</span>条</div>
<div class="abs inp" style="left:1110.5px;top:665.5px;width:97px;height:23.5px;background:#fff"><span class="ph" style="left:8px;color:#606266;font-size:11px">20条/页</span><span class="chev" style="left:81px"><svg width="9" height="6" viewBox="0 0 9 6"><path d="M1 1L4.5 4.5L8 1" fill="none" stroke="#b8bcc4" stroke-width="1"/></svg></span></div>
<div class="abs pg" style="left:1221px;background:#f2f3f5"><svg style="position:absolute;left:9px;top:7.5px" width="6" height="9" viewBox="0 0 6 9"><path d="M4.8 1L1.3 4.5L4.8 8" fill="none" stroke="#c0c4cc" stroke-width="1.3"/></svg></div>
<div class="abs pg" style="left:1251px;background:#1677ff;color:#fff">1</div>
<div class="abs pg" style="left:1282px">2</div>
<div class="abs pg" style="left:1312px"><svg style="position:absolute;left:9.5px;top:7.5px" width="6" height="9" viewBox="0 0 6 9"><path d="M1.2 1L4.7 4.5L1.2 8" fill="none" stroke="#606266" stroke-width="1.5"/></svg></div>
<div class="abs lbl" style="left:1353px;top:669px;color:#606266">前往</div>
<div class="abs inp" style="left:1381px;top:665.5px;width:41px;height:23px;background:#fff;text-align:center;color:#606266">1</div>
<div class="abs lbl" style="left:1428px;top:669px;color:#606266">页</div>
</div></body></html>
